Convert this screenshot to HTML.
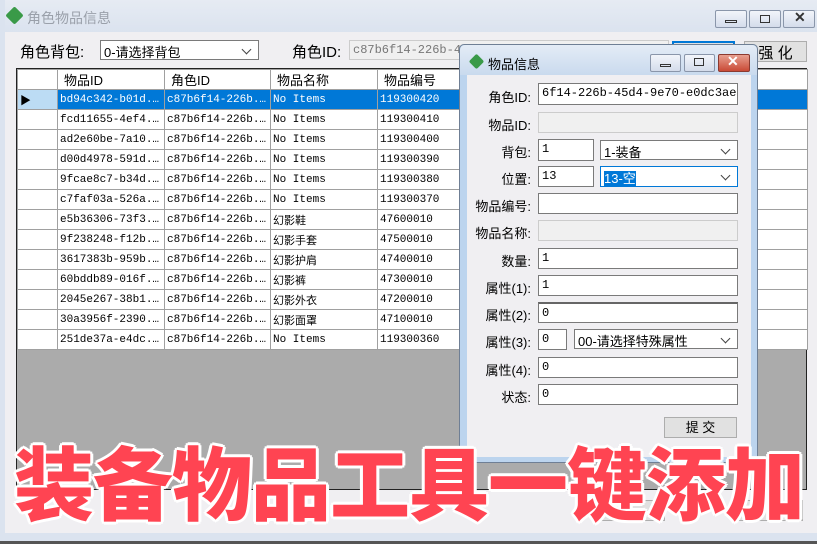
<!DOCTYPE html>
<html><head><meta charset="utf-8"><style>
*{margin:0;padding:0;box-sizing:border-box}
body{width:817px;height:544px;overflow:hidden;background:#f0eff2;font-family:"Liberation Sans","Noto Sans CJK SC",sans-serif;position:relative;font-size:13px;color:#000}
.a{position:absolute}
.tb{background:#fff;border:1px solid #7a7a7a;font-family:"Liberation Mono","Noto Sans CJK SC",monospace;font-size:12px;padding:2px 3px;white-space:nowrap;overflow:hidden}
.dis{background:#f0f0f0;border-color:#ccc}
.lbl{font-size:13px;text-align:right;white-space:nowrap}
.cb{background:#fff;border:1px solid #7a7a7a;font-size:13px;padding:1px 3px;white-space:nowrap}
.cb:after{content:"";position:absolute;right:8px;top:5px;width:6px;height:6px;border-right:1px solid #444;border-bottom:1px solid #444;transform:rotate(45deg)}
.btn{background:#e1e1e1;border:1px solid #adadad;text-align:center;font-size:13px}
.wb{border:1px solid #8a96aa;border-radius:2px;background:linear-gradient(#f2f5fa,#d4dceb);height:18px}
table{border-collapse:collapse;font-family:"Liberation Mono","Noto Sans CJK SC",monospace;font-size:11px}
td{border:1px solid #a0a0a0;height:20px;padding:0 2px;white-space:nowrap;overflow:hidden;text-overflow:ellipsis;background:#fff}
tr.sel td{background:#0078d7;color:#fff}
.ov{font-family:"Noto Sans CJK SC",sans-serif;font-weight:900;font-size:80px;color:#ff4452;text-shadow:0 0 3px #fff,2px 2px 0 #fff,-2px -2px 0 #fff,2px -2px 0 #fff,-2px 2px 0 #fff,3px 0 0 #fff,-3px 0 0 #fff,0 3px 0 #fff,0 -3px 0 #fff;letter-spacing:-1px;white-space:nowrap}
</style></head><body>
<div class="a" style="left:0;top:0;width:817px;height:32px;background:linear-gradient(#e6ebf3,#dbe3ef)"></div>
<div class="a" style="left:0;top:0;width:5px;height:544px;background:#dbe3ef"></div>
<div class="a" style="left:8px;top:9px;width:13px;height:13px;background:#3a9a48;transform:rotate(45deg);border-radius:2px"></div>
<div class="a" style="left:27px;top:8px;font-size:14px;color:#9aa0aa">角色物品信息</div>
<div class="a wb" style="left:715px;top:10px;width:32px"></div>
<div class="a wb" style="left:749px;top:10px;width:32px"></div>
<div class="a wb" style="left:783px;top:10px;width:32px"></div>
<div class="a" style="left:725px;top:20px;width:12px;height:3px;border:1px solid #333"></div>
<div class="a" style="left:760px;top:15px;width:10px;height:8px;border:1px solid #333"></div>
<div class="a" style="left:794px;top:9px;font-size:14px;color:#333;font-weight:bold">✕</div>
<div class="a" style="left:5px;top:32px;width:812px;height:501px;background:#f0eff2"></div>
<div class="a" style="left:20px;top:41px;font-size:15px">角色背包:</div>
<div class="a cb" style="left:100px;top:40px;width:159px;height:20px">0-请选择背包</div>
<div class="a" style="left:292px;top:41px;font-size:15px">角色ID:</div>
<div class="a tb dis" style="left:349px;top:40px;width:320px;height:20px;color:#777">c87b6f14-226b-45d4-9e70-e0dc3aedf495</div>
<div class="a btn" style="left:672px;top:41px;width:63px;height:21px;border:2px solid #0078d7"></div>
<div class="a btn" style="left:744px;top:41px;width:63px;height:21px;font-size:15px">强 化</div>
<div class="a" style="left:16px;top:68px;width:791px;height:422px;background:#ababab;border:1px solid #222"></div>
<table class="a" style="left:17px;top:69px;width:790px;table-layout:fixed">
<colgroup><col style="width:40px"><col style="width:107px"><col style="width:106px"><col style="width:107px"><col style="width:430px"></colgroup>
<tr><td></td><td style="font-family:'Liberation Sans','Noto Sans CJK SC';font-size:13px;padding-left:6px">物品ID</td><td style="font-family:'Liberation Sans','Noto Sans CJK SC';font-size:13px;padding-left:6px">角色ID</td><td style="font-family:'Liberation Sans','Noto Sans CJK SC';font-size:13px;padding-left:6px">物品名称</td><td style="font-family:'Liberation Sans','Noto Sans CJK SC';font-size:13px;padding-left:6px">物品编号</td></tr>
<tr class="sel"><td style="background:#bcdcf4;color:#000">▶</td><td>bd94c342-b01d...</td><td>c87b6f14-226b...</td><td>No Items</td><td>119300420</td></tr>
<tr><td></td><td>fcd11655-4ef4...</td><td>c87b6f14-226b...</td><td>No Items</td><td>119300410</td></tr>
<tr><td></td><td>ad2e60be-7a10...</td><td>c87b6f14-226b...</td><td>No Items</td><td>119300400</td></tr>
<tr><td></td><td>d00d4978-591d...</td><td>c87b6f14-226b...</td><td>No Items</td><td>119300390</td></tr>
<tr><td></td><td>9fcae8c7-b34d...</td><td>c87b6f14-226b...</td><td>No Items</td><td>119300380</td></tr>
<tr><td></td><td>c7faf03a-526a...</td><td>c87b6f14-226b...</td><td>No Items</td><td>119300370</td></tr>
<tr><td></td><td>e5b36306-73f3...</td><td>c87b6f14-226b...</td><td>幻影鞋</td><td>47600010</td></tr>
<tr><td></td><td>9f238248-f12b...</td><td>c87b6f14-226b...</td><td>幻影手套</td><td>47500010</td></tr>
<tr><td></td><td>3617383b-959b...</td><td>c87b6f14-226b...</td><td>幻影护肩</td><td>47400010</td></tr>
<tr><td></td><td>60bddb89-016f...</td><td>c87b6f14-226b...</td><td>幻影裤</td><td>47300010</td></tr>
<tr><td></td><td>2045e267-38b1...</td><td>c87b6f14-226b...</td><td>幻影外衣</td><td>47200010</td></tr>
<tr><td></td><td>30a3956f-2390...</td><td>c87b6f14-226b...</td><td>幻影面罩</td><td>47100010</td></tr>
<tr><td></td><td>251de37a-e4dc...</td><td>c87b6f14-226b...</td><td>No Items</td><td>119300360</td></tr>
</table>
<div class="a btn" style="left:593px;top:500px;width:72px;height:21px"></div>
<div class="a btn" style="left:731px;top:500px;width:72px;height:21px"></div>
<div class="a" style="left:5px;top:533px;width:812px;height:8px;background:#dbe3ef"></div>
<div class="a" style="left:0;top:541px;width:817px;height:3px;background:#555"></div>
<div class="a" style="left:459px;top:44px;width:299px;height:419px;background:#bcd4ee;border:1px solid #6f7f95;border-radius:5px 5px 0 0"></div>
<div class="a" style="left:460px;top:45px;width:297px;height:30px;background:linear-gradient(#e4ecf6,#c9daee);border-radius:5px 5px 0 0"></div>
<div class="a" style="left:471px;top:56px;width:11px;height:11px;background:#3a9a48;transform:rotate(45deg);border-radius:2px"></div>
<div class="a" style="left:488px;top:54px;font-size:13px">物品信息</div>
<div class="a wb" style="left:650px;top:54px;width:31px"></div>
<div class="a wb" style="left:684px;top:54px;width:31px"></div>
<div class="a" style="left:718px;top:54px;width:32px;height:18px;border:1px solid #8b3a30;border-radius:2px;background:linear-gradient(#e8a090,#c94a36)"></div>
<div class="a" style="left:660px;top:64px;width:11px;height:3px;border:1px solid #333"></div>
<div class="a" style="left:694px;top:58px;width:10px;height:8px;border:1px solid #333"></div>
<div class="a" style="left:727px;top:53px;font-size:14px;color:#fff;font-weight:bold">✕</div>
<div class="a" style="left:467px;top:75px;width:284px;height:382px;background:#f0eff2"></div>
<div class="a lbl" style="left:467px;top:87px;width:64px">角色ID:</div>
<div class="a tb" style="left:538px;top:83px;width:200px;height:22px;font-size:12px">6f14-226b-45d4-9e70-e0dc3aedf495</div>
<div class="a lbl" style="left:467px;top:115px;width:64px">物品ID:</div>
<div class="a tb dis" style="left:538px;top:112px;width:200px;height:21px"></div>
<div class="a lbl" style="left:467px;top:142px;width:64px">背包:</div>
<div class="a tb" style="left:538px;top:139px;width:56px;height:22px">1</div>
<div class="a cb" style="left:600px;top:140px;width:138px;height:20px">1-装备</div>
<div class="a lbl" style="left:467px;top:169px;width:64px">位置:</div>
<div class="a tb" style="left:538px;top:166px;width:56px;height:21px">13</div>
<div class="a cb" style="left:600px;top:166px;width:138px;height:21px;border-color:#0078d7"><span style="background:#0078d7;color:#fff">13-空</span></div>
<div class="a lbl" style="left:467px;top:196px;width:64px">物品编号:</div>
<div class="a tb" style="left:538px;top:193px;width:200px;height:21px"></div>
<div class="a lbl" style="left:467px;top:223px;width:64px">物品名称:</div>
<div class="a tb dis" style="left:538px;top:220px;width:200px;height:21px"></div>
<div class="a lbl" style="left:467px;top:251px;width:64px">数量:</div>
<div class="a tb" style="left:538px;top:248px;width:200px;height:21px">1</div>
<div class="a lbl" style="left:467px;top:278px;width:64px">属性(1):</div>
<div class="a tb" style="left:538px;top:275px;width:200px;height:21px">1</div>
<div class="a lbl" style="left:467px;top:305px;width:64px">属性(2):</div>
<div class="a tb" style="left:538px;top:302px;width:200px;height:21px;border-top:2px solid #666">0</div>
<div class="a lbl" style="left:467px;top:332px;width:64px">属性(3):</div>
<div class="a tb" style="left:538px;top:329px;width:29px;height:21px">0</div>
<div class="a cb" style="left:574px;top:329px;width:164px;height:20px">00-请选择特殊属性</div>
<div class="a lbl" style="left:467px;top:360px;width:64px">属性(4):</div>
<div class="a tb" style="left:538px;top:357px;width:200px;height:21px">0</div>
<div class="a lbl" style="left:467px;top:387px;width:64px">状态:</div>
<div class="a tb" style="left:538px;top:384px;width:200px;height:21px">0</div>
<div class="a btn" style="left:664px;top:417px;width:73px;height:21px;line-height:19px">提 交</div>
<div class="a ov" style="left:14px;top:430px;line-height:100px">装备物品工具一键添加</div>
</body></html>
